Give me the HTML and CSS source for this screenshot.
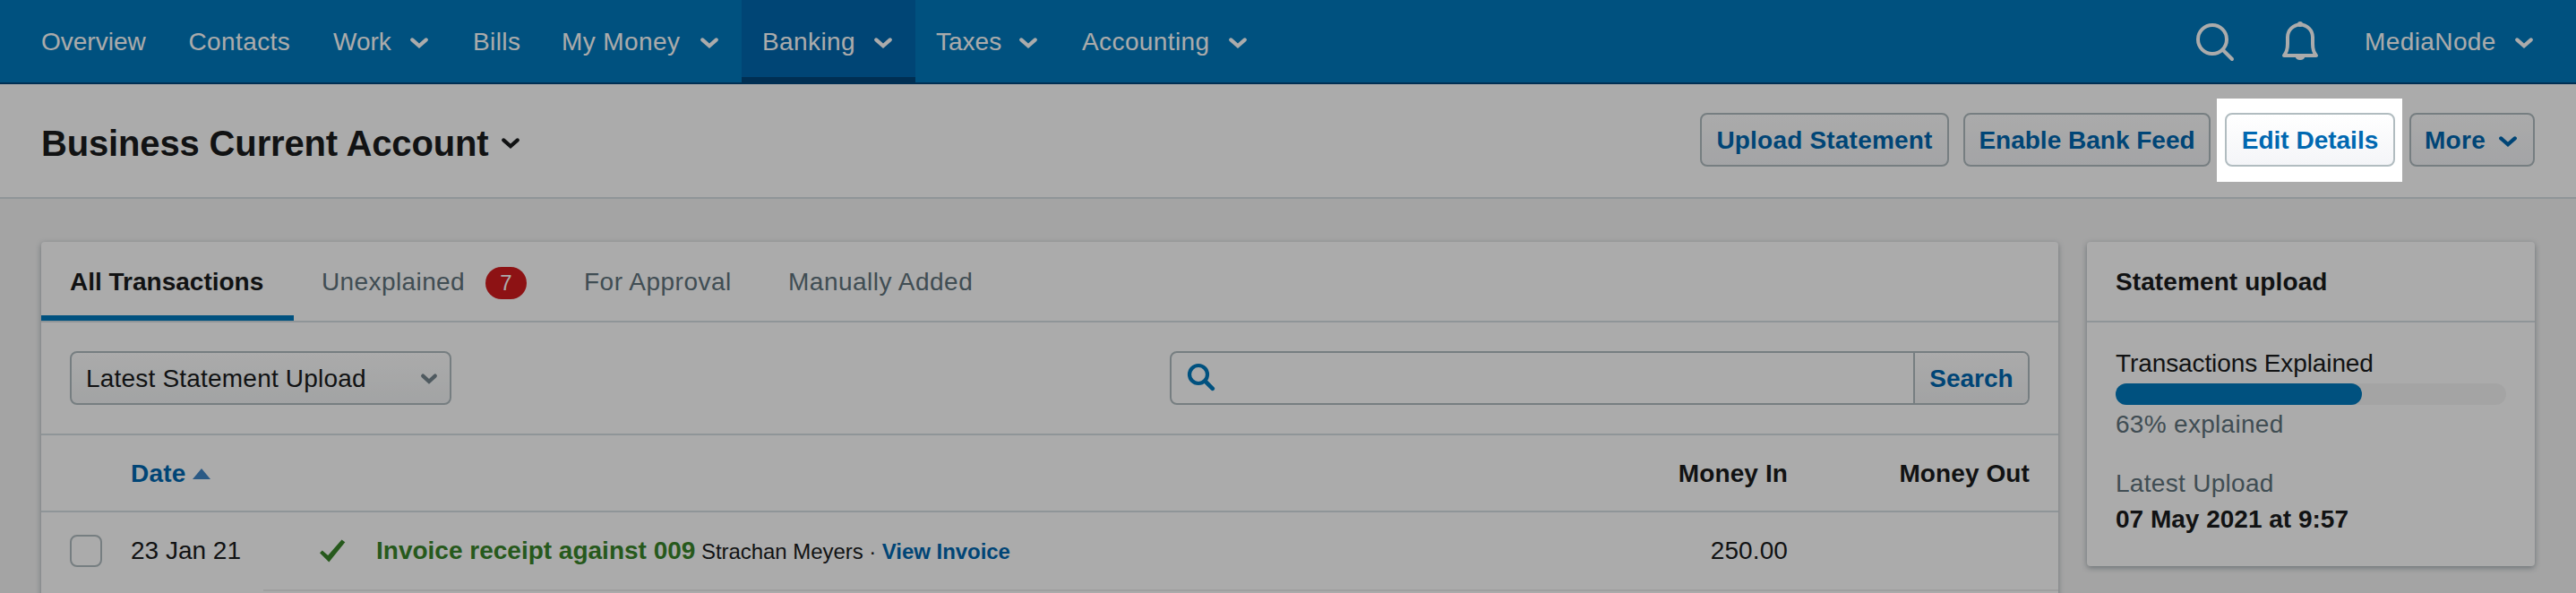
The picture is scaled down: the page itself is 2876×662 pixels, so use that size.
FILE: index.html
```html
<!DOCTYPE html>
<html lang="en">
<head>
<meta charset="utf-8">
<title>Business Current Account</title>
<link rel="stylesheet" href="styles.css">
</head>
<body>
<svg class="sprite" aria-hidden="true">
  <symbol id="chevron" viewBox="0 0 24 24"><path d="M4.2 8.4 12 15.3 19.8 8.4" fill="none" stroke="currentColor" stroke-width="4.2" stroke-linecap="round" stroke-linejoin="miter"/></symbol>
</svg>

<nav class="topbar">
  <a class="nav-item nav-overview">Overview</a>
  <a class="nav-item nav-contacts">Contacts</a>
  <a class="nav-item nav-work tight">Work <svg class="chevron"><use href="#chevron"/></svg></a>
  <a class="nav-item nav-bills">Bills</a>
  <a class="nav-item nav-money">My Money <svg class="chevron"><use href="#chevron"/></svg></a>
  <a class="nav-item nav-banking active">Banking <svg class="chevron"><use href="#chevron"/></svg></a>
  <a class="nav-item nav-taxes tight">Taxes <svg class="chevron"><use href="#chevron"/></svg></a>
  <a class="nav-item nav-accounting">Accounting <svg class="chevron"><use href="#chevron"/></svg></a>
  <div class="nav-tools">
    <svg class="tool-search" viewBox="0 0 48 48"><circle cx="22" cy="22" r="16" fill="none" stroke="currentColor" stroke-width="4"/><path d="M33.5 33.5 44 44" stroke="currentColor" stroke-width="4" stroke-linecap="round"/></svg>
    <svg class="tool-bell" viewBox="0 0 48 48"><path d="M6 40C9 36.5 10 32 10 27V19.5A14 14 0 0 1 38 19.5V27C38 32 39 36.5 42 40Z" fill="none" stroke="currentColor" stroke-width="4" stroke-linejoin="round"/><circle cx="24" cy="5" r="3" fill="currentColor"/><path d="M18.5 41a5.6 5 0 0 0 11 0Z" fill="currentColor"/></svg>
    <a class="account">MediaNode <svg class="chevron"><use href="#chevron"/></svg></a>
  </div>
</nav>

<header class="page-header">
  <h1 class="title">Business Current Account <svg class="chevron"><use href="#chevron"/></svg></h1>
  <div class="actions">
    <button class="btn btn-upload">Upload Statement</button>
    <button class="btn btn-feed">Enable Bank Feed</button>
    <div class="spot-anchor"><span class="spotlight"></span><button class="btn btn-edit">Edit Details</button></div>
    <button class="btn btn-more">More <svg class="chevron"><use href="#chevron"/></svg></button>
  </div>
</header>

<main class="content">
  <section class="card transactions">
    <div class="tabs">
      <a class="tab tab-all current">All Transactions</a>
      <a class="tab tab-unexplained">Unexplained <span class="badge">7</span></a>
      <a class="tab tab-approval">For Approval</a>
      <a class="tab">Manually Added</a>
    </div>
    <div class="filters">
      <div class="select">Latest Statement Upload <svg class="select-arrow" viewBox="0 0 20 14"><path d="M3.2 3.6 10 9.8 16.8 3.6" fill="none" stroke="currentColor" stroke-width="4.2" stroke-linecap="round"/></svg></div>
      <div class="search">
        <div class="search-field"><svg class="search-icon" viewBox="0 0 32 32"><circle cx="13" cy="13" r="10" fill="none" stroke="currentColor" stroke-width="4.2"/><path d="M20.5 20.5 28.8 28.8" stroke="currentColor" stroke-width="4.6" stroke-linecap="round"/></svg></div>
        <button class="search-btn">Search</button>
      </div>
    </div>
    <div class="row head">
      <span></span>
      <span class="sort">Date <svg class="sort-arrow" viewBox="0 0 20 12"><path d="M0 12 10 0 20 12Z" fill="currentColor"/></svg></span>
      <span></span><span></span>
      <span class="amount">Money In</span>
      <span class="amount">Money Out</span>
    </div>
    <div class="row entry">
      <span class="checkbox"></span>
      <span class="date">23 Jan 21</span>
      <svg class="tick" viewBox="0 0 32 28"><path d="M2 16.3 4.8 13.6 11.2 19 26.5 1.6 30.3 4.2 12.3 26.4Z" fill="currentColor"/></svg>
      <span class="desc"><b class="explained">Invoice receipt against 009</b><span class="small"> Strachan Meyers · <b class="link">View Invoice</b></span></span>
      <span class="amount">250.00</span>
      <span></span>
    </div>
    <div class="divider"></div>
  </section>

  <aside class="card upload">
    <h2 class="upload-title">Statement upload</h2>
    <div class="upload-body">
      <div class="explained-label">Transactions Explained</div>
      <div class="progress"><div class="progress-fill" style="width:63%"></div></div>
      <div class="muted">63% explained</div>
      <div class="muted latest">Latest Upload</div>
      <div class="upload-date">07 May 2021 at 9:57</div>
    </div>
  </aside>
</main>
</body>
</html>
```
FILE: styles.css
```css
* { box-sizing: border-box; }
body {
  margin: 0;
  width: 2876px;
  height: 662px;
  overflow: hidden;
  background: #f5f5f5;
  color: #1a1c1d;
  font: 28px/40px "Liberation Sans", Arial, sans-serif;
  letter-spacing: .4px;
}
.sprite { position: absolute; width: 0; height: 0; }
.chevron { width: 24px; height: 24px; margin-top: 3px; flex: none; }

.topbar {
  display: flex;
  height: 94px;
  padding: 0 46px 0 22px;
  background: #007abe;
  border-bottom: 2px solid #00467d;
  color: #fff;
}
.nav-item {
  display: flex;
  align-items: center;
  justify-content: space-between;
  height: 92px;
  padding: 1px 24px 0;
  white-space: nowrap;
}
.nav-overview { width: 163.5px; letter-spacing: 0; }
.nav-contacts { width: 162.5px; padding-left: 25px; }
.nav-work { width: 156px; }
.nav-bills { width: 100px; }
.nav-money { width: 224px; padding-left: 23px; }
.nav-banking { width: 194px; padding-left: 23px; }
.nav-taxes { width: 162px; padding-left: 23px; }
.nav-accounting { width: 234px; }
.nav-item.tight { letter-spacing: 0; }
.nav-item.active { height: 94px; background: #0068af; box-shadow: inset 0 -8px #00467d; padding-bottom: 2px; }
.nav-tools { display: flex; align-items: center; margin-left: auto; }
.tool-search { width: 48px; height: 48px; margin-right: 48px; }
.tool-bell { width: 48px; height: 48px; margin-right: 48px; }
.account { display: flex; align-items: center; justify-content: space-between; width: 190px; padding-top: 1px; }

.page-header {
  display: flex;
  align-items: center;
  justify-content: space-between;
  height: 128px;
  padding: 0 46px 2px;
  background: #fff;
  border-bottom: 2px solid #d5dee3;
}
.title {
  display: flex;
  align-items: center;
  gap: 13px;
  margin: 0;
  padding-top: 7px;
  font-size: 40px;
  line-height: 48px;
  letter-spacing: -.15px;
}
.title .chevron { margin-top: 1px; }
.actions { display: flex; gap: 16px; }
.btn {
  display: flex;
  align-items: center;
  justify-content: center;
  height: 60px;
  padding: 1px 0 0;
  border: 2px solid #b1bcc0;
  border-radius: 8px;
  background: linear-gradient(#fff, #f4f5f8);
  color: #0068b1;
  font: bold 28px/40px "Liberation Sans", Arial, sans-serif;
  letter-spacing: 0;
  white-space: nowrap;
}
.btn-upload { width: 278px; letter-spacing: .2px; }
.btn-feed { width: 276px; }
.btn-edit { width: 190px; }
.btn-more { width: 140px; justify-content: space-between; padding: 1px 16px 0 15px; letter-spacing: .3px; }
.spot-anchor { position: relative; }
/* Tour spotlight: everything outside the box is dimmed */
.spotlight {
  position: absolute;
  z-index: 10;
  left: -9px;
  top: -16px;
  width: 207px;
  height: 93px;
  box-shadow: 0 0 0 3000px rgba(0, 0, 0, .33);
  pointer-events: none;
}

.content { display: flex; align-items: flex-start; gap: 32px; padding: 48px 46px 0; }
.card { background: #fff; border-radius: 4px; box-shadow: 0 2px 6px rgba(60, 80, 90, .45); }
.transactions { width: 2252px; height: 420px; }
.tabs { display: flex; height: 90px; border-bottom: 2px solid #d5dee3; color: #60737d; }
.tab { display: flex; align-items: center; height: 88px; padding: 1px 32px 0; white-space: nowrap; letter-spacing: .5px; }
.tab.current { color: #1a1c1d; font-weight: bold; letter-spacing: 0; box-shadow: inset 0 -6px #007abe; }
.tab-all { width: 282px; }
.tab-unexplained { width: 292px; padding: 1px 32px 0 31px; justify-content: space-between; letter-spacing: .4px; }
.tab-approval { width: 228px; }
.badge {
  width: 46px;
  height: 36px;
  margin-top: 3px;
  border-radius: 18px;
  background: #d21b1e;
  color: #fff;
  font-size: 24px;
  line-height: 35px;
  text-align: center;
}
.filters { display: flex; justify-content: space-between; height: 126px; padding: 32px; border-bottom: 2px solid #d5dee3; }
.select {
  display: flex;
  align-items: center;
  justify-content: space-between;
  width: 426px;
  height: 60px;
  padding: 1px 13px 0 16px;
  border: 2px solid #b1bcc0;
  border-radius: 8px;
  background: linear-gradient(#fff, #f2f4f5);
  letter-spacing: .2px;
}
.select-arrow { width: 20px; height: 14px; margin-top: 1px; color: #77868f; }
.search { display: flex; width: 960px; height: 60px; border: 2px solid #b1bcc0; border-radius: 8px; overflow: hidden; }
.search-field { flex: 1; padding: 11px 17px; }
.search-icon { display: block; width: 32px; height: 32px; color: #007abe; }
.search-btn {
  width: 128px;
  padding: 1px 0 0;
  border: 0;
  border-left: 2px solid #b1bcc0;
  background: linear-gradient(#fff, #f2f3f4);
  color: #0068b1;
  font: bold 28px/40px "Liberation Sans", Arial, sans-serif;
}
.row {
  display: grid;
  grid-template-columns: 68px 210px 64px 1fr 200px 270px;
  align-items: center;
  padding: 0 32px;
}
.row.head { height: 86px; padding-top: 1px; border-bottom: 2px solid #d5dee3; font-weight: bold; letter-spacing: .2px; }
.sort { display: flex; align-items: center; gap: 7px; color: #0068b1; }
.sort-arrow { width: 20px; height: 12px; color: #4186c7; }
.amount { text-align: right; letter-spacing: .1px; }
.row.entry { height: 86px; white-space: nowrap; }
.checkbox { width: 36px; height: 36px; border: 2px solid #b1bcc0; border-radius: 8px; }
.date { letter-spacing: 0; }
.tick { width: 32px; height: 28px; margin-left: -1px; color: #3a852b; }
.desc { letter-spacing: 0; }
.explained { color: #3a852b; }
.small { font-size: 24px; letter-spacing: -.05px; }
.link { color: #0068b1; }
.divider { height: 2px; margin-left: 248px; background: #ededed; }

.upload { width: 500px; height: 362px; }
.upload-title { margin: 0; height: 90px; padding: 25px 32px 23px; border-bottom: 2px solid #d5dee3; font-size: 28px; line-height: 40px; letter-spacing: .1px; }
.upload-body { padding: 26px 32px; }
.explained-label { letter-spacing: -.1px; }
.progress { height: 24px; margin: 2px 0; border-radius: 12px; background: #f5f5f5; }
.progress-fill { height: 24px; border-radius: 12px; background: #007abe; }
.muted { color: #60737d; letter-spacing: .3px; }
.latest { margin-top: 26px; }
.upload-date { font-weight: bold; letter-spacing: 0; }
```
